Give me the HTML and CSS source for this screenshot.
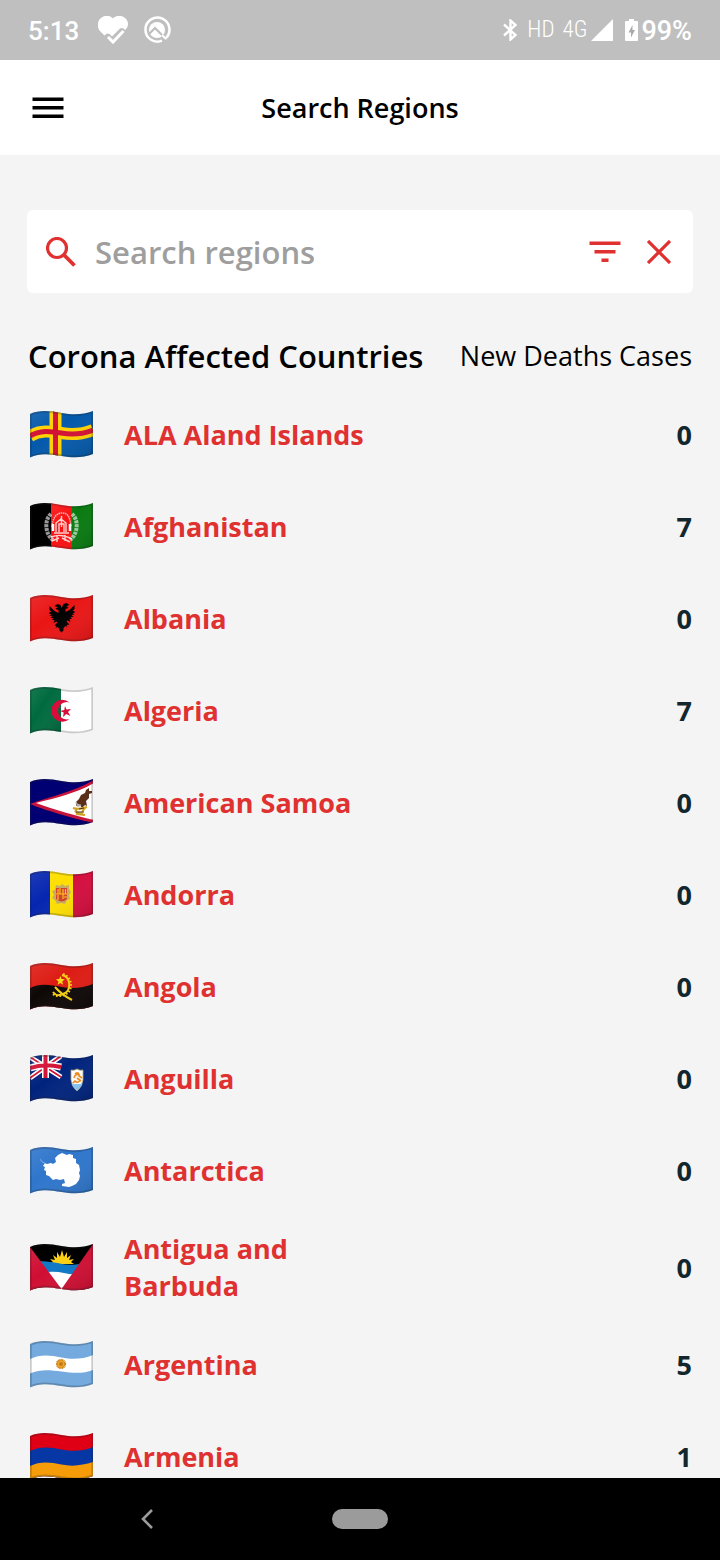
FILE: index.html
```html
<!DOCTYPE html>
<html lang="en">
<head>
<meta charset="utf-8">
<meta name="viewport" content="width=device-width, initial-scale=1">
<title>Search Regions</title>
<link rel="stylesheet" href="styles.css">
</head>
<body>
<svg class="defs" aria-hidden="true">
  <defs>
    <clipPath id="wave"><path d="M0 3C10-1.500 20 0 31.500 2S53 4 63 0V43C53 47 43 47 31.500 45S10 41.500 0 46.500Z"/></clipPath>
    <linearGradient id="sheen" x1="0" y1="0" x2="1" y2="1">
      <stop offset="0" stop-color="#fff" stop-opacity=".1"/>
      <stop offset=".4" stop-color="#fff" stop-opacity="0"/>
      <stop offset="1" stop-color="#000" stop-opacity=".14"/>
    </linearGradient>
    <symbol id="shade" viewBox="0 0 63 47">
      <path d="M0 3C10-1.500 20 0 31.500 2S53 4 63 0V43C53 47 43 47 31.500 45S10 41.500 0 46.500Z" fill="none" stroke="#222" stroke-opacity=".24" stroke-width="3.400"/>
    </symbol>
  </defs>
</svg>

<div class="status">
  <div class="status-group">
    <span class="clock">5:13</span>
    <svg class="heart" width="30" height="28" viewBox="0 0 30 28"><path fill="#fff" d="M15 2.500C12-1 6-1 3 2C-1 5-1 12 2 15L6.500 19.500Q9 16.500 11.500 18L14 20.500L22 12.500Q25 11 27 14C31 11 31 5 27 2C24-1 18-1 15 2.500Z"/><path d="M10 21l5 5L25.500 15" fill="none" stroke="#fff" stroke-width="3"/></svg>
    <svg width="28" height="28" viewBox="0 0 28 28" fill="none" stroke="#fff"><path d="M22.500 22.500A12 12 0 1 0 19 24.700" stroke-width="2.500"/><circle cx="14" cy="14" r="8" fill="#fff" stroke="none"/><path d="M6 18l6-6 11 11" stroke="#bfbfbf" stroke-width="2.200"/><path d="M19 19l4 4" stroke-width="2"/></svg>
  </div>
  <div class="status-group status-right">
    <svg width="14" height="22" viewBox="0 0 14 22" fill="none" stroke="#fff" stroke-width="2.400"><path d="M1 5.500L12.500 16 7.500 20.500V1.500L12.500 6 1 16.500"/></svg>
    <span class="net">HD</span>
    <span class="net net-4g">4G</span>
    <svg class="signal" width="22" height="22" viewBox="0 0 22 22"><path d="M22 0V22H0Z" fill="#fff"/></svg>
    <svg class="battery" width="13" height="22" viewBox="0 0 13 22"><path d="M4 0h5v2h3q1 0 1 1v18q0 1-1 1H1q-1 0-1-1V3q0-1 1-1h3Z" fill="#fff"/><path d="M7.500 6L3.500 13.500h2.500V18.500L10 11H7.500Z" fill="#aaa"/></svg>
    <span class="percent">99%</span>
  </div>
</div>

<header class="bar">
  <button class="icon-button" aria-label="Menu"><svg width="32" height="22" viewBox="0 0 32 22"><path d="M.5.500h31v3.400H.5zM.5 9h31v3.400H.5zM.5 17.500h31V21H.5z"/></svg></button>
  <h1>Search Regions</h1>
</header>

<main>
  <form class="search" role="search">
    <svg width="30" height="30" viewBox="0 0 30 30" fill="none" stroke="#e03131"><circle cx="11" cy="11" r="9.500" stroke-width="3.200"/><path d="M18 18L28.500 28.500" stroke-width="3.800"/></svg>
    <input type="text" placeholder="Search regions" aria-label="Search regions">
    <button type="button" class="icon-button" aria-label="Filter"><svg width="32" height="22" viewBox="0 0 32 22" fill="#e03131"><path d="M.5.500h31v3.500H.5zM5.500 9h21v3.400h-21zM12.500 17.500h7V21h-7z"/></svg></button>
    <button type="button" class="icon-button" aria-label="Clear"><svg width="24" height="24" viewBox="0 0 24 24" fill="none" stroke="#e03131" stroke-width="3.200"><path d="M1 1L23 23M23 1L1 23"/></svg></button>
  </form>

  <div class="heading"><h2>Corona Affected Countries</h2><p>New Deaths Cases</p></div>

  <ul class="regions">
    <li><svg class="flag" viewBox="0 0 63 47"><g clip-path="url(#wave)"><path fill="#0459ab" d="M0 0h63v47H0z"/><g fill="none"><path d="M0 25C10 19 20 20 31 22S53 23 63 19" stroke="#ffd200" stroke-width="12"/><path d="M25.500 0v47" stroke="#ffd200" stroke-width="12"/><path d="M0 25C10 19 20 20 31 22S53 23 63 19" stroke="#d21034" stroke-width="5"/><path d="M25.500 0v47" stroke="#d21034" stroke-width="5"/></g><path fill="url(#sheen)" d="M0 0h63v47H0z"/><use href="#shade"/></g></svg><span class="name">ALA Aland Islands</span><span class="count">0</span></li>
    <li><svg class="flag" viewBox="0 0 63 47"><g clip-path="url(#wave)"><path d="M0 0h22v47H0z"/><path fill="#f91111" d="M21 0h21v47H21z"/><path fill="#087a10" d="M42 0h21v47H42z"/><g fill="none" stroke="#fff"><path stroke-width="4" stroke-opacity=".6" stroke-dasharray="3 .8" d="M21 11C14 17 15 31 23 37M42 11C49 17 48 31 40 37"/><path d="M22 24q1-13 9.500-14T41 24" stroke-width="1.500" stroke-opacity=".7" stroke-dasharray="1.500 .7"/><path d="M26 29v-9l5-4 5 4v9M29 29v-8h5v8M31.500 13v11M24 30h15M21 34q10-4 21 2M22 38l7-3M32 35l8 4M27 32v7M35 32v6" stroke-width="1.400" stroke-opacity=".8"/><path d="M23 21v7M40 21v7" stroke-width="2.500"/></g><path fill="url(#sheen)" d="M21 0h42v47H21z"/><use href="#shade"/></g></svg><span class="name">Afghanistan</span><span class="count">7</span></li>
    <li><svg class="flag" viewBox="0 0 63 47"><g clip-path="url(#wave)"><path fill="#ea1515" d="M0 0h63v47H0z"/><path d="M31.500 13l-1-3-3-1-3 2 3 1-2 2 3 1 0 3-4-2-5-5v4l2 2h-2v2h2l-2 1.500 3 .5-2 2h3l-1.500 2h2.500l-1 3 3-1.500 1 1-3 3 2 .5-1 2 2-1 2 2v1.500l2 2 2-2V33l2-2 2 1-1-2 3-.5-3-3 1-1 3 1.500-1-3h2.500l-1.500-2h3l-2-2 3-.5-2-1.500h2v-2h-2l2-2v-4l-5 5-4 2 0-3 3-1-2-2 3-1-3-2-3 1z"/><path fill="url(#sheen)" d="M0 0h63v47H0z"/><use href="#shade"/></g></svg><span class="name">Albania</span><span class="count">0</span></li>
    <li><svg class="flag" viewBox="0 0 63 47"><g clip-path="url(#wave)"><path fill="#006b3f" d="M0 0h31v47H0z"/><path fill="#fff" d="M31 0h32v47H31z"/><path fill="url(#sheen)" d="M0 0h31v47H0z"/><path fill="#d80d3b" d="M39.500 15.500A11 11 0 1 0 39.500 32 8.700 8.700 0 1 1 39.500 15.500ZM35 19l1.500 3.500 4.500-.5-3 3 2.500 4-4.200-2-3.300 3 .7-4.500-3.700-1.500 4.300-1z"/><use href="#shade"/></g></svg><span class="name">Algeria</span><span class="count">7</span></li>
    <li><svg class="flag" viewBox="0 0 63 47"><g clip-path="url(#wave)"><path fill="#000073" d="M0 0h63v47H0z"/><path d="M0 25C20 18 46 12 64 1V44C49 41 17 32 0 25Z" fill="#c9143a"/><path d="M6 24C26 19 47 14 64 4V41C47 37 25 31 6 24Z" fill="#fff"/><path d="M59 9l-3 2-1 3-4 2-2 4-3 3 0 4 3-2 3 4 3-3 2 1-1-5 3-3 0-4 3-1v-2l-3 0z" fill="#5a2e17"/><path d="M46 23l2 4 3-1" fill="none" stroke="#aaa" stroke-width="1.500"/><path d="M43 29q6 2 14-1M45 33l8 2M47 30l-2 3M55 29l-3 4M46 35l9 1" fill="none" stroke="#d0a123" stroke-width="2"/><path d="M46 33h8M49 30l5-1" stroke="#4b3320" stroke-width="1"/><use href="#shade"/></g></svg><span class="name">American Samoa</span><span class="count">0</span></li>
    <li><svg class="flag" viewBox="0 0 63 47"><g clip-path="url(#wave)"><path fill="#0526b0" d="M0 0h20v47H0z"/><path fill="#fedf00" d="M20 0h23v47H20z"/><path fill="#d50d3d" d="M43 0h20v47H43z"/><path d="M26 14l4 1 2-2 3 2 4-1v4l2 3-2 3 1 4-3 1-2 4-4-1-4 1-2-4-3-2 2-3-2-4 3-1z" fill="#c5ae62"/><path d="M26 17h11v11q-5 5-11 0z" fill="#d0402b"/><path d="M28 18v5M30 17v6M26 23h11M33 18v10M35.500 18v5M28 24v5M34 26h3" stroke="#ffc61c" stroke-width="1.100"/><path fill="url(#sheen)" d="M0 0h63v47H0z"/><use href="#shade"/></g></svg><span class="name">Andorra</span><span class="count">0</span></li>
    <li><svg class="flag" viewBox="0 0 63 47"><g clip-path="url(#wave)"><path fill="#dd1c14" d="M0 0h63v47H0z"/><path d="M0 25C10 20 20 22 31.500 24S53 25 63 21V47H0z" fill="#0d0706"/><path d="M32 12C41 14 42 28 33 31 29 33 25 32 23 29" fill="none" stroke="#f5cf13" stroke-width="2"/><path d="M33 11C43 14 44 29 34 32 29 34 24 33 22 30" fill="none" stroke="#f5cf13" stroke-width="2" stroke-dasharray="1.700 1.700"/><path d="M25 24Q32 32 42 37" fill="none" stroke="#f5cf13" stroke-width="2"/><path d="M30.500 13l1 3 3.300.2-2.600 2.200.9 3.400-2.800-1.900-2.800 1.900 1-3.400-2.600-2.200 3.300-.2z" fill="#f9dc16"/><path fill="url(#sheen)" d="M0 0h63v47H0z"/><use href="#shade"/></g></svg><span class="name">Angola</span><span class="count">0</span></li>
    <li><svg class="flag" viewBox="0 0 63 47"><g clip-path="url(#wave)"><path fill="#00237d" d="M0 0h63v47H0z"/><g fill="none"><path d="M0 2L31 22M0 23L31 1" stroke="#fff" stroke-width="5"/><path d="M0 2L31 22M0 23L31 1" stroke="#d21034" stroke-width="1.800"/><path d="M0 13Q14 8 31 12M15.500 0v23" stroke="#fff" stroke-width="7"/><path d="M0 13Q14 8 31 12M15.500 0v23" stroke="#d21034" stroke-width="4"/></g><path d="M41 15q3 1 6-1 3 2 6 1v10q-1 7-6 11-5-4-6-11z" fill="#fff" stroke="#b9a268" stroke-width=".8"/><path d="M41.500 29h11q-2 4-5.500 6.500-4-3-5.500-6.500z" fill="#88c8f4"/><path d="M45 19q4-3 4 2l3 2M50 25q-2 4-5 1l-2 2M44 23q1-5 6-3M47 23l4 3" fill="none" stroke="#f38a17" stroke-width="1.600"/><path fill="url(#sheen)" d="M0 0h63v47H0z"/><use href="#shade"/></g></svg><span class="name">Anguilla</span><span class="count">0</span></li>
    <li><svg class="flag" viewBox="0 0 63 47"><g clip-path="url(#wave)"><path fill="#2f76cc" d="M0 0h63v47H0z"/><path fill="url(#sheen)" d="M0 0h63v47H0z"/><path d="M10 11l2 4 5 2 4-1 2 1 3-2-1-4 3-3 4-2 5 2 2-1 4 1v3l3 1 0 4 3 2 1 5-1 3 1 3-1 4-3 4-4 2-3 1-7-1v-2l3-1-1-4-4 1-4-1-3 1-4-4-3-1 0-4-2-1 1-3-2-1 2-3-4-2z" fill="#fff"/><use href="#shade"/></g></svg><span class="name">Antarctica</span><span class="count">0</span></li>
    <li><svg class="flag" viewBox="0 0 63 47"><g clip-path="url(#wave)"><path d="M0 0h63v47H0z"/><path fill="#ffd116" d="M20 20l3-2-3-3 5 1-2-5 4 3 0-6 3 5 2-7 2 7 3-5 0 6 4-3-2 5 5-1-3 3 3 2z"/><path fill="#1279c7" d="M9 17Q24 18 32 20T56 19V32H9z"/><path fill="#fff" d="M16 28Q26 27 34 29T48 30V47H16z"/><path d="M0 3L31.500 45 63 0V47H0z" fill="#d00e33"/><path fill="url(#sheen)" d="M0 3L31.500 45 63 0V47H0z"/><use href="#shade"/></g></svg><span class="name">Antigua and Barbuda</span><span class="count">0</span></li>
    <li><svg class="flag" viewBox="0 0 63 47"><g clip-path="url(#wave)"><path fill="#74aadd" d="M0 0h63v47H0z"/><path d="M0 18C10 13 20 14 31.500 16.500S53 18 63 14V29C53 33 43 32 31.500 30.500S10 28 0 32.500Z" fill="#fff"/><circle cx="31" cy="23" r="4.300" fill="#eba625" stroke="#c77b18" stroke-width="1.600" stroke-dasharray="1 .5"/><circle cx="31" cy="23" r="2" fill="#c47a1b"/><use href="#shade"/></g></svg><span class="name">Argentina</span><span class="count">5</span></li>
    <li><svg class="flag" viewBox="0 0 63 47"><g clip-path="url(#wave)"><path fill="#df0015" d="M0 0h63v47H0z"/><path d="M0 18C10 13 20 14 31.500 16.500S53 18 63 14V47H0Z" fill="#0637a5"/><path d="M0 33C10 28 20 29 31.500 31.500S53 32 63 29V47H0Z" fill="#f59c08"/><use href="#shade"/></g></svg><span class="name">Armenia</span><span class="count">1</span></li>
  </ul>
</main>

<nav class="system">
  <button class="icon-button" aria-label="Back"><svg width="12" height="20" viewBox="0 0 12 20" fill="none" stroke="#9b9b9b" stroke-width="2.600"><path d="M11 1L2 10l9 9"/></svg></button>
  <button class="home" aria-label="Home"></button>
  <span></span>
</nav>
</body>
</html>
```
FILE: styles.css
```css
* {
  box-sizing: border-box;
}

body {
  margin: 0;
  height: 100vh;
  display: flex;
  flex-direction: column;
  overflow: hidden;
  background: #f4f4f4;
  color: #000;
  font-family: "Open Sans", "Noto Sans", sans-serif;
}

h1, h2, p, ul {
  margin: 0;
  padding: 0;
}

svg {
  display: block;
  flex: none;
}

.defs {
  position: absolute;
  width: 0;
  height: 0;
}

.icon-button {
  display: flex;
  padding: 0;
  border: 0;
  background: none;
}

.status {
  flex: none;
  display: flex;
  align-items: center;
  justify-content: space-between;
  height: 60px;
  padding: 0 28px;
  background: #bfbfbf;
  color: #fff;
  font-family: Roboto, sans-serif;
}

.status-group {
  display: flex;
  align-items: center;
}

.clock,
.percent {
  padding-top: 2px;
  font-size: 27px;
  font-weight: 500;
  line-height: 32px;
}

.clock {
  font-size: 26px;
}

.heart {
  margin: 0 15px 0 19px;
}

.net {
  margin-left: 10px;
  font-family: "Roboto Condensed", Roboto, sans-serif;
  font-size: 23px;
  font-weight: 300;
  line-height: 32px;
}

.net-4g {
  margin-left: 8px;
}

.signal {
  margin: 0 12px 0 4px;
}

.battery {
  margin-right: 3px;
}

.bar {
  flex: none;
  display: grid;
  grid-template-columns: 1fr auto 1fr;
  align-items: center;
  height: 95px;
  padding: 0 32px;
  background: #fff;
}

h1 {
  font-size: 27px;
  font-weight: 600;
  line-height: 36px;
}

main {
  flex: 1;
  min-height: 0;
  overflow: hidden;
  padding: 55px 28px 0;
}

.search {
  display: flex;
  align-items: center;
  height: 83px;
  margin: 0 -1px;
  padding: 0 22px 0 19px;
  border-radius: 6px;
  background: #fff;
}

.search input {
  flex: 1;
  min-width: 0;
  margin: 0 20px 0 19px;
  padding: 0;
  border: 0;
  outline: 0;
  background: none;
  font: 600 31px/42px "Open Sans", "Noto Sans", sans-serif;
}

.search input::placeholder {
  color: #9e9e9e;
  opacity: 1;
}

.search .icon-button + .icon-button {
  margin-left: 26px;
}

.heading {
  display: flex;
  align-items: center;
  justify-content: space-between;
  margin: 41px 0 10px;
  white-space: nowrap;
}

h2 {
  font-size: 31px;
  font-weight: 600;
  line-height: 44px;
}

.heading p {
  font-size: 27px;
  line-height: 40px;
}

.regions {
  list-style: none;
}

.regions li {
  display: flex;
  align-items: center;
  min-height: 92px;
  padding: 14px 0;
  font-size: 27px;
  font-weight: 700;
  line-height: 37px;
}

.flag {
  width: 63px;
  height: 47px;
  margin: 0 31px 0 2px;
}

.name {
  max-width: 250px;
  color: #e03131;
}

.count {
  margin-left: auto;
  color: #12262d;
}

.system {
  flex: none;
  display: grid;
  grid-template-columns: 1fr auto 1fr;
  align-items: center;
  height: 82px;
  background: #000;
}

.system .icon-button {
  justify-self: center;
  padding-right: 38px;
}

.home {
  width: 56px;
  height: 20px;
  padding: 0;
  border: 0;
  border-radius: 10px;
  background: #9b9b9b;
}
```
